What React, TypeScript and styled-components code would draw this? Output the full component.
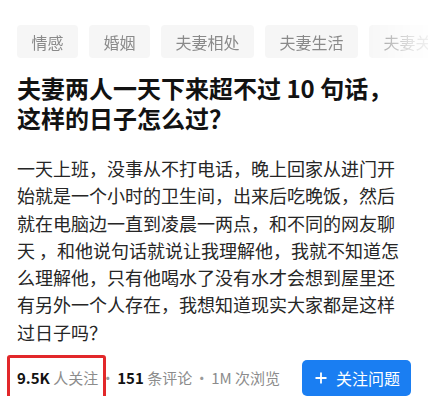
import React from "react";
import styled, {createGlobalStyle} from "styled-components";

const tags = ["情感", "婚姻", "夫妻相处", "夫妻生活", "夫妻关系"];

const body = "一天上班，没事从不打电话，晚上回家从进门开始就是一个小时的卫生间，出来后吃晚饭，然后就在电脑边一直到凌晨一两点，和不同的网友聊天 ，和他说句话就说让我理解他，我就不知道怎么理解他，只有他喝水了没有水才会想到屋里还有另外一个人存在，我想知道现实大家都是这样过日子吗？";

export default function App() {
    return <>
        <GlobalStyle/>
        <StyledPage>
            <StyledTagRow>
                {tags.map(tag => <StyledTag key={tag}>{tag}</StyledTag>)}
            </StyledTagRow>
            <StyledTitle>夫妻两人一天下来超不过 10 句话，这样的日子怎么过？</StyledTitle>
            <StyledBody>{body}</StyledBody>
            <StyledFooter>
                <StyledStats>
                    <StyledStat $marked>
                        <StyledNumber>9.5K</StyledNumber> 人关注
                    </StyledStat>
                    <StyledDot>·</StyledDot>
                    <StyledStat>
                        <StyledNumber>151</StyledNumber> 条评论
                    </StyledStat>
                    <StyledDot>·</StyledDot>
                    <StyledStat>1M 次浏览</StyledStat>
                </StyledStats>
                <StyledFollowButton>
                    <svg width="12" height="12" viewBox="0 0 12 12">
                        <path d="M6 0.5v11M0.5 6h11" stroke="#fff" strokeWidth="1.8" fill="none"/>
                    </svg>
                    关注问题
                </StyledFollowButton>
            </StyledFooter>
        </StyledPage>
    </>
}

const GlobalStyle = createGlobalStyle`
  body {
    margin: 0;
    background: #fff;
    font-family: "Noto Sans CJK SC", "Noto Sans", sans-serif;
  }
`

const StyledPage = styled.main`
  padding: 25px 17px 0 17px;
`

const StyledTagRow = styled.div`
  display: flex;
  gap: 11px;
  margin-right: -17px;
  overflow: hidden;
  -webkit-mask-image: linear-gradient(to right, #000 345px, rgba(0, 0, 0, 0.25) 395px, transparent 428px);
  mask-image: linear-gradient(to right, #000 345px, rgba(0, 0, 0, 0.25) 395px, transparent 428px);
`

const StyledTag = styled.span`
  flex-shrink: 0;
  display: flex;
  align-items: center;
  height: 33px;
  padding: 0 14.5px;
  background-color: #f6f6f6;
  border-radius: 4px;
  font-size: 16px;
  color: #8a8a8a;
  white-space: nowrap;
`

const StyledTitle = styled.h1`
  margin: 15px 0 0 0;
  font-size: 24px;
  font-weight: 700;
  line-height: 30px;
  color: #121212;
`

const StyledBody = styled.p`
  margin: 22px 0 0 0;
  font-size: 18px;
  line-height: 27.3px;
  color: #262626;
`

const StyledFooter = styled.div`
  display: flex;
  align-items: center;
  justify-content: space-between;
  margin-top: 14px;
`

const StyledStats = styled.div`
  display: flex;
  align-items: center;
  font-size: 15px;
  line-height: 22px;
  color: #8c8c8c;
`

const StyledStat = styled.span<{ $marked?: boolean }>`
  position: relative;
  white-space: nowrap;

  &::after {
    content: "";
    display: ${props => props.$marked ? "block" : "none"};
    position: absolute;
    top: -12px;
    bottom: -11px;
    left: -10px;
    right: -8px;
    border: 3px solid #e2282a;
    border-radius: 3px;
  }
`

const StyledNumber = styled.b`
  font-weight: 700;
  color: #121212;
`

const StyledDot = styled.span`
  display: inline-block;
  width: 19px;
  text-align: center;
  color: #9a9a9a;
`

const StyledFollowButton = styled.button`
  display: flex;
  align-items: center;
  gap: 9px;
  height: 36px;
  padding: 0 11px 0 13px;
  border: none;
  border-radius: 5px;
  background-color: #1a7ef2;
  color: #fff;
  font-family: inherit;
  font-size: 16px;
`
